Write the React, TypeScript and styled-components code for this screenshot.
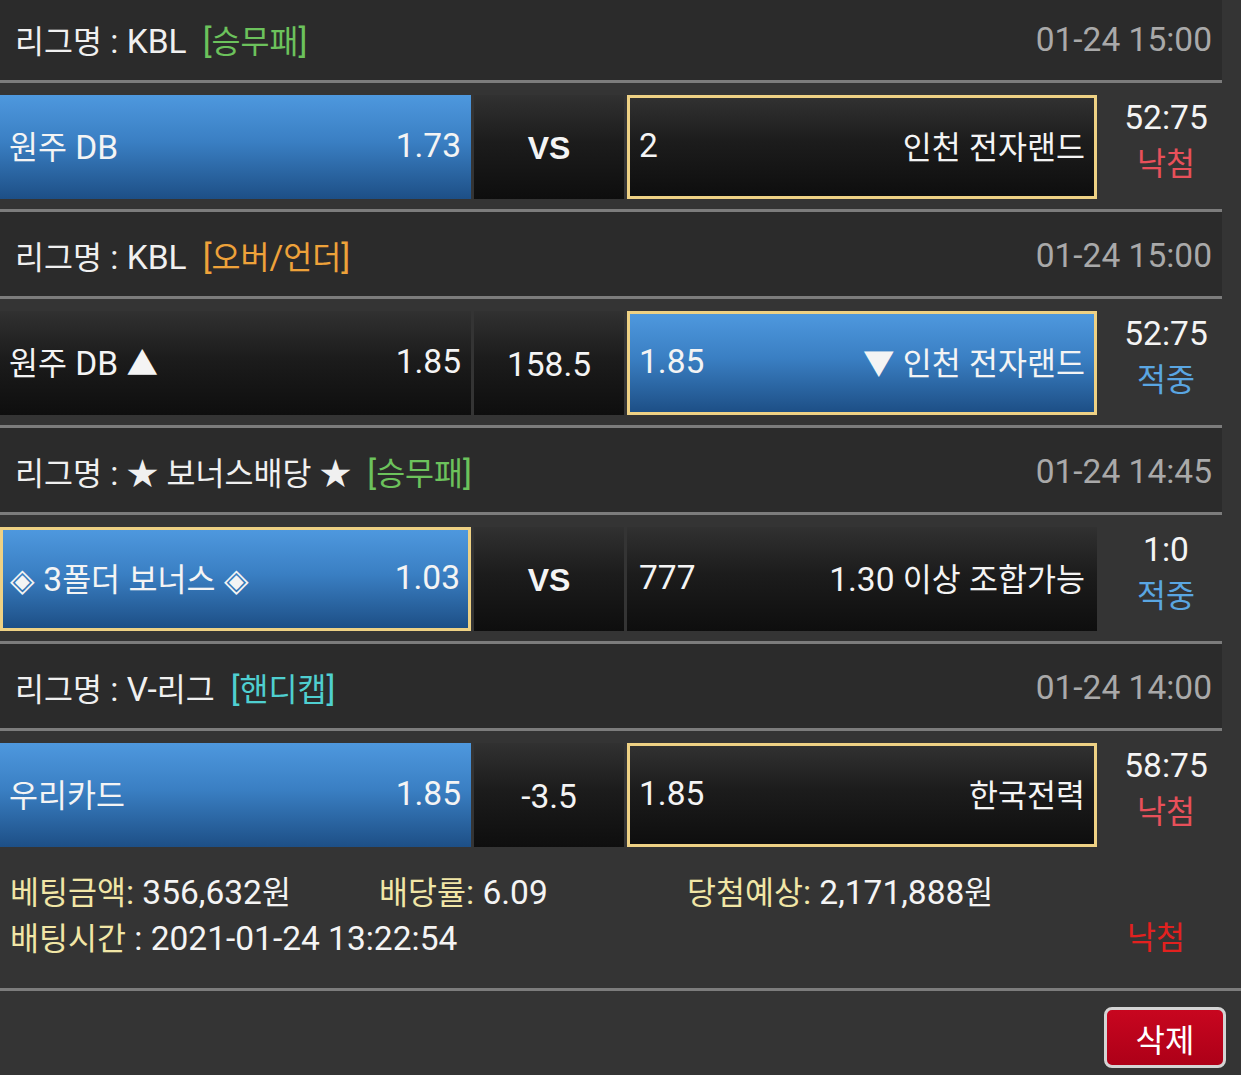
import styled, { createGlobalStyle } from "styled-components";

type Side = "home" | "away";

interface Game {
    league: string;
    tag: string;
    tagColor: string;
    time: string;
    home: string;
    homeOdds: string;
    mid: string;
    midBold?: boolean;
    away: string;
    awayOdds: string;
    win: Side;
    pick: Side;
    score: string;
    result: "낙첨" | "적중";
}

const games: Game[] = [
    {
        league: "KBL",
        tag: "[승무패]",
        tagColor: "#6cc25c",
        time: "01-24 15:00",
        home: "원주 DB",
        homeOdds: "1.73",
        mid: "VS",
        midBold: true,
        away: "인천 전자랜드",
        awayOdds: "2",
        win: "home",
        pick: "away",
        score: "52:75",
        result: "낙첨",
    },
    {
        league: "KBL",
        tag: "[오버/언더]",
        tagColor: "#eea23a",
        time: "01-24 15:00",
        home: "원주 DB ▲",
        homeOdds: "1.85",
        mid: "158.5",
        away: "▼ 인천 전자랜드",
        awayOdds: "1.85",
        win: "away",
        pick: "away",
        score: "52:75",
        result: "적중",
    },
    {
        league: "★ 보너스배당 ★",
        tag: "[승무패]",
        tagColor: "#6cc25c",
        time: "01-24 14:45",
        home: "◈ 3폴더 보너스 ◈",
        homeOdds: "1.03",
        mid: "VS",
        midBold: true,
        away: "1.30 이상 조합가능",
        awayOdds: "777",
        win: "home",
        pick: "home",
        score: "1:0",
        result: "적중",
    },
    {
        league: "V-리그",
        tag: "[핸디캡]",
        tagColor: "#4fcfd0",
        time: "01-24 14:00",
        home: "우리카드",
        homeOdds: "1.85",
        mid: "-3.5",
        away: "한국전력",
        awayOdds: "1.85",
        win: "home",
        pick: "away",
        score: "58:75",
        result: "낙첨",
    },
];

// 라틴 문자는 한글보다 살짝 크게 보여서 따로 감싼다
const T = ({ children }: { children: string }) => (
    <>
        {children.split(/([\x20-\x7E]+)/).map((part, i) =>
            /^[\x20-\x7E]+$/.test(part) ? <Lat key={i}>{part}</Lat> : part
        )}
    </>
);

const App = () => {
    return (
        <>
            <GlobalStyle />
            <Page>
                <List>
                    {games.map((g, i) => (
                        <Block key={i}>
                            <LeagueHeader>
                                <LeagueName>
                                    <T>{`리그명 : ${g.league}`}</T>
                                    <Tag $color={g.tagColor}>
                                        <T>{g.tag}</T>
                                    </Tag>
                                </LeagueName>
                                <Time>
                                    <T>{g.time}</T>
                                </Time>
                            </LeagueHeader>
                            <Divider />
                            <MatchRow>
                                <TeamCell $win={g.win === "home"} $picked={g.pick === "home"}>
                                    <span><T>{g.home}</T></span>
                                    <span><T>{g.homeOdds}</T></span>
                                </TeamCell>
                                <MidCell $bold={g.midBold}>
                                    {g.midBold ? g.mid : <T>{g.mid}</T>}
                                </MidCell>
                                <TeamCell $win={g.win === "away"} $picked={g.pick === "away"}>
                                    <span><T>{g.awayOdds}</T></span>
                                    <span><T>{g.away}</T></span>
                                </TeamCell>
                                <ScoreCell>
                                    <Score><T>{g.score}</T></Score>
                                    <Result $hit={g.result === "적중"}>{g.result}</Result>
                                </ScoreCell>
                            </MatchRow>
                            {i < games.length - 1 && <Divider />}
                        </Block>
                    ))}
                </List>

                <BetInfo>
                    <InfoLine>
                        <InfoItem>
                            <Label><T>베팅금액:</T></Label>
                            <T> 356,632원</T>
                        </InfoItem>
                        <InfoItem>
                            <Label><T>배당률:</T></Label>
                            <T> 6.09</T>
                        </InfoItem>
                        <InfoItem>
                            <Label><T>당첨예상:</T></Label>
                            <T> 2,171,888원</T>
                        </InfoItem>
                    </InfoLine>
                    <TimeLine>
                        <InfoItem>
                            <Label>배팅시간</Label>
                            <T> : 2021-01-24 13:22:54</T>
                        </InfoItem>
                        <FinalResult>낙첨</FinalResult>
                    </TimeLine>
                </BetInfo>

                <Footer>
                    <DeleteButton>삭제</DeleteButton>
                </Footer>
            </Page>
        </>
    );
};

export default App;

const GlobalStyle = createGlobalStyle`
    html, body {
        margin: 0;
        padding: 0;
        background: #343434;
    }
    body {
        font-family: Roboto, "Noto Sans CJK KR", sans-serif;
        color: #f2f2f2;
    }
`;

const Page = styled.div`
    width: 1241px;
    min-height: 1075px;
    background: #343434;
    overflow: hidden;
    font-size: 31.5px;
`;

const Lat = styled.span`
    font-size: 33.5px;
`;

const List = styled.div`
    width: 1222px;
    margin-top: -4px;
`;

const Block = styled.div`
    display: flex;
    flex-direction: column;
`;

const LeagueHeader = styled.div`
    display: flex;
    height: 84px;
    padding: 2px 10px 0 15px;
    box-sizing: border-box;
    justify-content: space-between;
    align-items: center;
    background: #2b2b2b;
`;

const LeagueName = styled.div`
    display: flex;
    align-items: baseline;
    color: #f0f0f0;
    white-space: pre;
`;

const Tag = styled.span<{ $color: string }>`
    margin-left: 16px;
    color: ${({ $color }) => $color};
`;

const Time = styled.div`
    color: #a9a9a9;
`;

const Divider = styled.div`
    height: 3px;
    background: #7c7c7c;
`;

const MatchRow = styled.div`
    display: grid;
    grid-template-columns: 471px 150px 470px 122px;
    gap: 3px;
    height: 126px;
    padding: 12px 0 10px;
    box-sizing: border-box;
    background: #343434;
`;

const TeamCell = styled.div<{ $win: boolean; $picked: boolean }>`
    display: flex;
    justify-content: space-between;
    align-items: center;
    padding: 0 ${({ $picked }) => ($picked ? "9px" : "12px")} 4px;
    box-sizing: border-box;
    border: ${({ $picked }) => ($picked ? "3px solid #eed184" : "none")};
    background: ${({ $win }) =>
        $win
            ? "linear-gradient(180deg, #4e98de 0%, #3a7fc3 45%, #1d4f86 100%)"
            : "linear-gradient(180deg, #313131 0%, #1c1c1c 45%, #0e0e0e 100%)"};
    color: #f4f4f4;
    white-space: pre;

    &:first-child {
        padding-left: ${({ $picked }) => ($picked ? "7px" : "9px")};
        padding-right: ${({ $picked }) => ($picked ? "8px" : "10px")};
    }
`;

const MidCell = styled.div<{ $bold?: boolean }>`
    display: flex;
    justify-content: center;
    align-items: center;
    padding-top: 2px;
    background: linear-gradient(180deg, #313131 0%, #1c1c1c 45%, #0e0e0e 100%);
    color: #f4f4f4;
    font-family: ${({ $bold }) => ($bold ? '"Liberation Sans", Arial, sans-serif' : "inherit")};
    font-size: ${({ $bold }) => ($bold ? "32px" : "inherit")};
    font-weight: ${({ $bold }) => ($bold ? 700 : 400)};
`;

const ScoreCell = styled.div`
    display: flex;
    flex-direction: column;
    align-items: center;
    padding-left: 10px;
    line-height: 46px;
`;

const Score = styled.span`
    color: #f4f4f4;
`;

const Result = styled.span<{ $hit: boolean }>`
    color: ${({ $hit }) => ($hit ? "#5aa6e2" : "#e8505a")};
`;

const BetInfo = styled.div`
    display: flex;
    flex-direction: column;
    padding: 13px 0 26px 10px;
    border-bottom: 3px solid #7c7c7c;
    line-height: 45px;
`;

const InfoLine = styled.div`
    display: grid;
    grid-template-columns: 369px 308px 1fr;
`;

const TimeLine = styled.div`
    display: flex;
    justify-content: space-between;
    padding-right: 56px;
`;

const InfoItem = styled.div`
    color: #f4f4f4;
    white-space: pre;
`;

const Label = styled.span`
    color: #f1e6a6;
`;

const FinalResult = styled.span`
    color: #e2211f;
`;

const Footer = styled.div`
    display: flex;
    justify-content: flex-end;
    padding: 16px 15px 0 0;
`;

const DeleteButton = styled.button`
    width: 122px;
    height: 61px;
    border: 3px solid #d4d4d4;
    border-radius: 8px;
    background: linear-gradient(180deg, #c8061f 0%, #ad0018 100%);
    color: #ffffff;
    font-family: Roboto, "Noto Sans CJK KR", sans-serif;
    font-size: 32px;
    cursor: pointer;
`;
